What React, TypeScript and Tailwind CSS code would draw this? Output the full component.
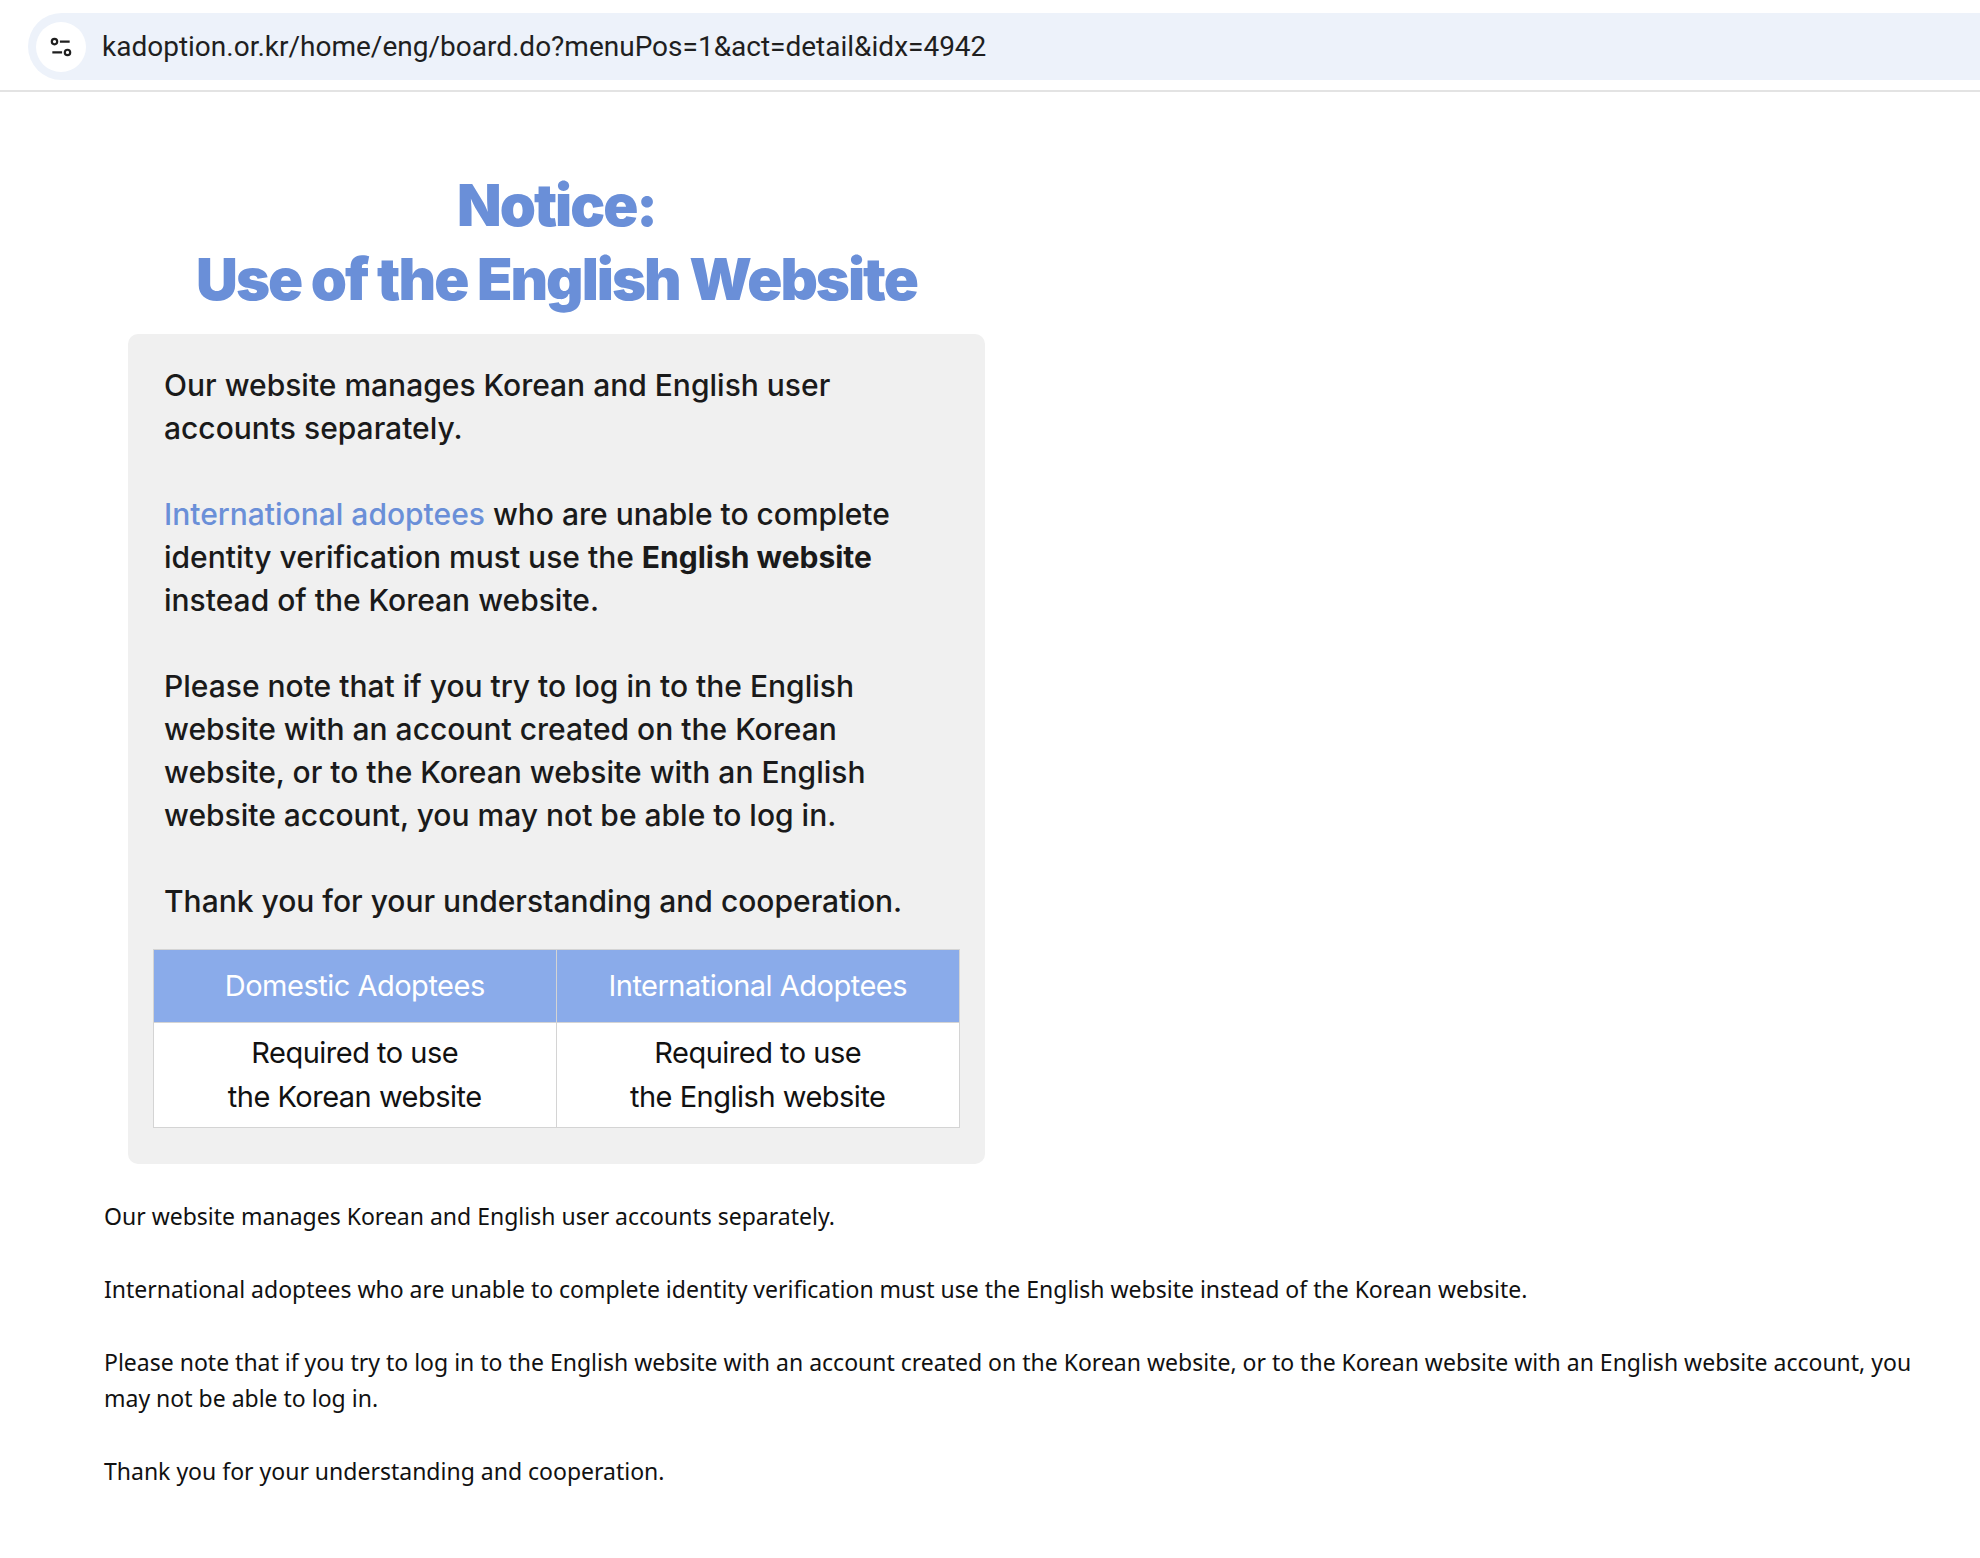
export default function App() {
  const p = 'text-[30px] leading-[43px] font-medium text-[#1a1a1a]';
  return (
    <div className="min-h-[1558px] bg-white font-['Noto_Sans',sans-serif]">
      {/* address bar */}
      <div className="h-[92px] border-b-2 border-[#e3e3e3] pt-[13px] pl-[28px]">
        <div className="flex h-[67px] items-center rounded-l-full bg-[#edf2fa] pl-[8px]">
          <div className="flex h-[50px] w-[50px] items-center justify-center rounded-full bg-white">
            <svg width="26" height="26" viewBox="0 0 24 24" fill="none" stroke="#1f1f1f" strokeWidth="2">
              <circle cx="6" cy="7" r="2.5" />
              <path d="M11 7h9M4 17h9" />
              <circle cx="18" cy="17" r="2.5" />
            </svg>
          </div>
          <span className="ml-[16px] text-[28px] text-[#1f1f1f] font-[Roboto,sans-serif]">
            kadoption.or.kr/home/eng/board.do?menuPos=1&amp;act=detail&amp;idx=4942
          </span>
        </div>
      </div>

      <div className="pl-[128px] pt-[76px] font-[Inter,sans-serif]">
        <div className="w-[857px] text-center font-black tracking-[-2px] text-[#6a8fd8] text-[58px] leading-[74px]">
          <div>Notice:</div>
          <div>Use of the English Website</div>
        </div>
        <div className="mt-[18px] w-[857px] rounded-[10px] bg-[#f0f0f0] px-[36px] pt-[30px] pb-[36px]">
          <p className={p}>Our website manages Korean and English user accounts separately.</p>
          <p className={`${p} mt-[43px]`}>
            <span className="text-[#6a8fd8]">International adoptees</span> who are unable to complete identity verification must use the <b className="font-bold">English website</b> instead of the Korean website.
          </p>
          <p className={`${p} mt-[43px]`}>
            Please note that if you try to log in to the English website with an account created on the Korean website, or to the Korean website with an English website account, you may not be able to log in.
          </p>
          <p className={`${p} mt-[43px]`}>Thank you for your understanding and cooperation.</p>
          <div className="-mx-[11px] mt-[26px] grid grid-cols-2 border border-[#d4d4d4] text-center text-[29px] tracking-[-0.5px]">
            <div className="flex h-[72px] items-center justify-center border-r border-[#d4d4d4] bg-[#8aabea] text-white">Domestic Adoptees</div>
            <div className="flex h-[72px] items-center justify-center bg-[#8aabea] text-white">International Adoptees</div>
            <div className="border-r border-t border-[#d4d4d4] bg-white py-[8px] leading-[44px] text-[#111]">Required to use<br />the Korean website</div>
            <div className="border-t border-[#d4d4d4] bg-white py-[8px] leading-[44px] text-[#111]">Required to use<br />the English website</div>
          </div>
        </div>
      </div>

      <div className="pl-[104px] pr-[60px] pt-[34px] text-[23px] leading-[36px] text-[#111] space-y-[37px]">
        <p>Our website manages Korean and English user accounts separately.</p>
        <p>International adoptees who are unable to complete identity verification must use the English website instead of the Korean website.</p>
        <p>Please note that if you try to log in to the English website with an account created on the Korean website, or to the Korean website with an English website account, you may not be able to log in.</p>
        <p>Thank you for your understanding and cooperation.</p>
      </div>
    </div>
  );
}
